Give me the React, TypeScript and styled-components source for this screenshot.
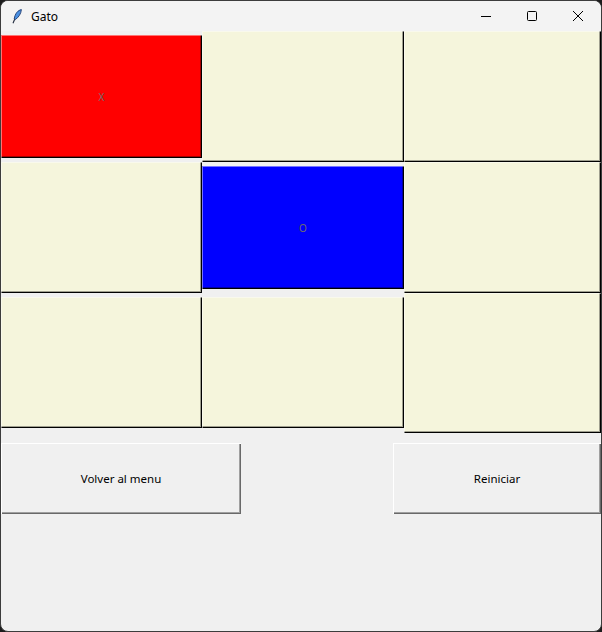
import React from "react";
import styled, { createGlobalStyle } from "styled-components";

const Global = createGlobalStyle`
  html, body { margin: 0; padding: 0; background: #1c1c1c; }
  body { width: 602px; height: 632px; overflow: hidden; }
  * { box-sizing: border-box; }
`;

const Window = styled.div`
  width: 602px;
  height: 632px;
  background: #f0f0f0;
  border: 1px solid #3c3c3c;
  border-radius: 8px;
  overflow: hidden;
  display: flex;
  flex-direction: column;
  font-family: "Noto Sans", "Open Sans", sans-serif;
`;

const TitleBar = styled.div`
  height: 30px;
  flex: none;
  background: #f3f3f3;
  display: flex;
  align-items: center;
  padding-left: 11px;
`;

const Title = styled.span`
  font-size: 12px;
  color: #000;
  margin-left: 9px;
  flex: 1;
`;

const Controls = styled.div`
  display: flex;
  height: 100%;
`;

const ControlBtn = styled.div`
  width: 46px;
  height: 100%;
  display: flex;
  align-items: center;
  justify-content: center;
`;

const Board = styled.div`
  display: grid;
  grid-template-columns: 201px 202px 197px;
  grid-template-rows: 131px 131px 140px;
`;

const Cell = styled.div<{ $bg: string; $h?: number }>`
  align-self: start;
  margin-top: ${(p) => (p.$h ? "4px" : "0")};
  height: ${(p) => (p.$h ? `${p.$h}px` : "100%")};
  background: ${(p) => p.$bg};
  box-shadow: inset 1px 1px 0 rgba(255, 255, 255, 0.45),
    inset -1px -1px 0 #000, inset -2px -2px 0 rgba(0, 0, 0, 0.35);
  display: flex;
  align-items: center;
  justify-content: center;
  font-size: 10px;
  color: #6d6d6d;
`;

const Actions = styled.div`
  display: flex;
  justify-content: space-between;
  margin-top: 10px;
`;

const ActionButton = styled.button<{ $w: number }>`
  width: ${(p) => p.$w}px;
  height: 71px;
  margin: 0;
  padding: 0;
  border: none;
  background: #f0f0f0;
  box-shadow: inset 1px 1px 0 #ffffff, inset -1px -1px 0 #696969,
    inset -2px -2px 0 #a0a0a0;
  font-family: "Noto Sans", "Open Sans", sans-serif;
  font-size: 11.5px;
  color: #000;
`;

const cells: { bg: string; label?: string; h?: number }[] = [
  { bg: "#ff0000", label: "X", h: 123 },
  { bg: "#f5f5dc" },
  { bg: "#f5f5dc" },
  { bg: "#f5f5dc" },
  { bg: "#0000ff", label: "O", h: 123 },
  { bg: "#f5f5dc" },
  { bg: "#f5f5dc", h: 131 },
  { bg: "#f5f5dc", h: 131 },
  { bg: "#f5f5dc" },
];

const Feather = () => (
  <svg width="10" height="15" viewBox="0 0 10 15">
    <path d="M9.4 0.6 C6 1.2 3 4.5 2.2 10 L3.2 10.6 C6.5 8.5 9 5 9.4 0.6 Z" fill="#4a90e2" stroke="#1e3a6e" strokeWidth="0.9" />
    <path d="M2.7 10.2 L1 14.3" stroke="#1e293b" strokeWidth="1.1" />
  </svg>
);

export default function App() {
  return (
    <>
      <Global />
      <Window>
        <TitleBar>
          <Feather />
          <Title>Gato</Title>
          <Controls>
            <ControlBtn>
              <svg width="10" height="10" viewBox="0 0 10 10">
                <path d="M0 5.5 H10" stroke="#000" strokeWidth="1" />
              </svg>
            </ControlBtn>
            <ControlBtn>
              <svg width="10" height="10" viewBox="0 0 10 10">
                <rect x="0.5" y="0.5" width="9" height="9" rx="1" fill="none" stroke="#000" strokeWidth="1" />
              </svg>
            </ControlBtn>
            <ControlBtn>
              <svg width="10" height="10" viewBox="0 0 10 10">
                <path d="M0 0 L10 10 M10 0 L0 10" stroke="#000" strokeWidth="1" />
              </svg>
            </ControlBtn>
          </Controls>
        </TitleBar>
        <Board>
          {cells.map((c, i) => (
            <Cell key={i} $bg={c.bg} $h={c.h}>
              {c.label}
            </Cell>
          ))}
        </Board>
        <Actions>
          <ActionButton $w={240}>Volver al menu</ActionButton>
          <ActionButton $w={208}>Reiniciar</ActionButton>
        </Actions>
      </Window>
    </>
  );
}
